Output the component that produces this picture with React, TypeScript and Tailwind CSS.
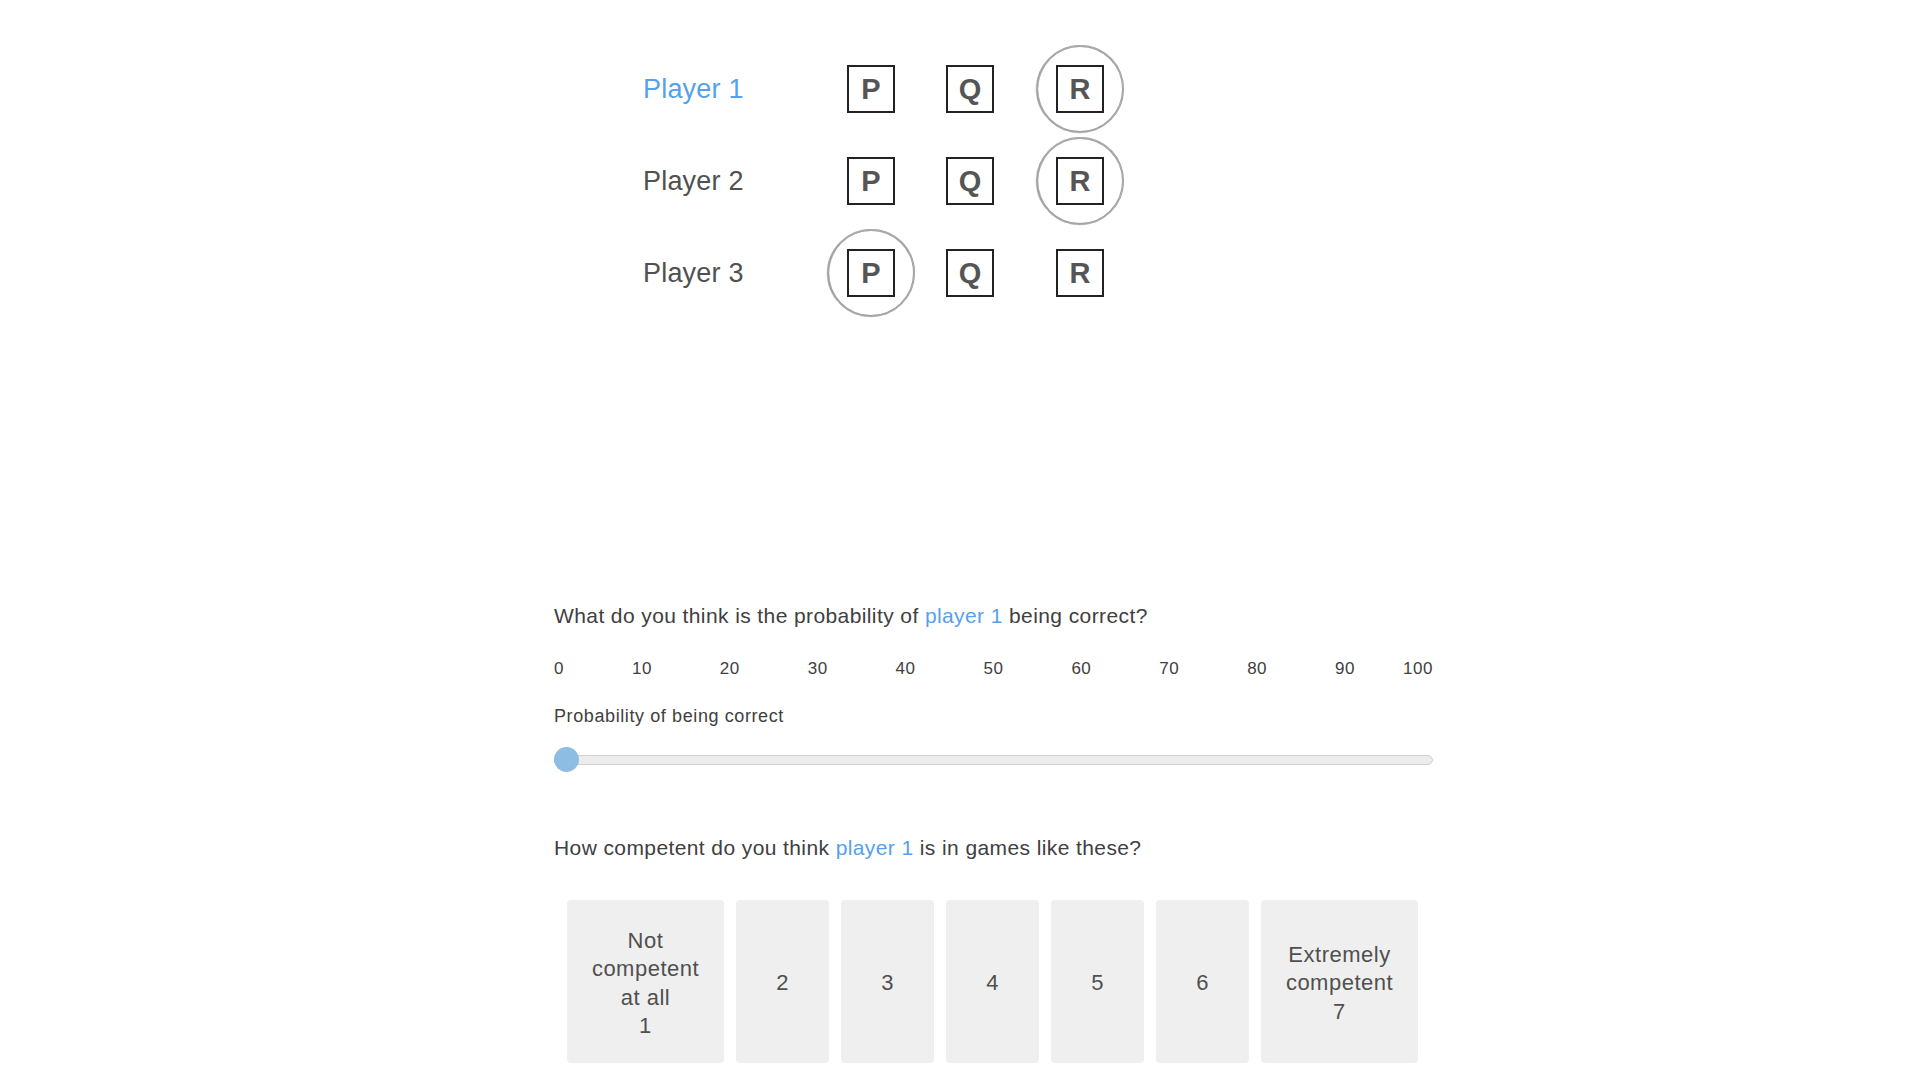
import React from "react";

const BLUE = "#55a1ee";

function SketchCircle() {
  return (
    <svg
      className="absolute inset-0 pointer-events-none"
      width="90"
      height="90"
      viewBox="0 0 90 90"
      fill="none"
    >
      <circle cx="45" cy="45" r="43" stroke="#8c8c8c" strokeWidth="2" opacity="0.85" />
      <ellipse
        cx="45.4"
        cy="44.7"
        rx="42.6"
        ry="43.3"
        stroke="#a8a8a8"
        strokeWidth="1.3"
        opacity="0.7"
        transform="rotate(25 45 45)"
      />
      <circle
        cx="44.6"
        cy="45.4"
        r="43.4"
        stroke="#b5b5b5"
        strokeWidth="1"
        strokeDasharray="7 3 12 2"
        opacity="0.7"
      />
    </svg>
  );
}

function Card({ letter, circled }: { letter: string; circled?: boolean }) {
  return (
    <div className="relative w-[90px] h-[90px] flex items-center justify-center">
      {circled && <SketchCircle />}
      <div className="w-[48px] h-[48px] border-2 border-[#222] flex items-center justify-center bg-white">
        <span className="text-[29px] leading-none font-bold text-[#555]">{letter}</span>
      </div>
    </div>
  );
}

const players = [
  { name: "Player 1", active: true, circled: "R" },
  { name: "Player 2", active: false, circled: "R" },
  { name: "Player 3", active: false, circled: "P" },
];

const ticks = [10, 20, 30, 40, 50, 60, 70, 80, 90];

export default function App() {
  return (
    <div className="min-h-screen w-full bg-white font-['Liberation_Sans',Arial,sans-serif] text-[#444]">
      <div className="pl-[554px] pt-[43px]">
        {/* Players */}
        <div className="ml-[89px] flex flex-col">
          {players.map((p) => (
            <div key={p.name} className="flex items-center h-[92px]">
              <div
                className={
                  "w-[183px] text-[27px] tracking-[0.2px] " +
                  (p.active ? "text-[#55a1ee]" : "text-[#505050]")
                }
              >
                {p.name}
              </div>
              <Card letter="P" circled={p.circled === "P"} />
              <div className="ml-[9px]">
                <Card letter="Q" circled={p.circled === "Q"} />
              </div>
              <div className="ml-[20px]">
                <Card letter="R" circled={p.circled === "R"} />
              </div>
            </div>
          ))}
        </div>

        {/* Question 1 */}
        <div className="w-[879px] mt-[283px]">
          <div className="text-[21px] leading-[28px] tracking-[0.4px] text-[#404040]">
            What do you think is the probability of{" "}
            <span style={{ color: BLUE }}>player 1</span> being correct?
          </div>

          <div className="mt-[27px] flex text-[17px] leading-[24px] tracking-[0.5px] text-[#404040]">
            <div className="w-[43.95px] text-left">0</div>
            {ticks.map((t) => (
              <div key={t} className="w-[87.9px] text-center">
                {t}
              </div>
            ))}
            <div className="w-[43.95px] text-right">100</div>
          </div>

          <div className="mt-[23px] text-[18px] leading-[24px] tracking-[0.6px] text-[#404040]">
            Probability of being correct
          </div>

          <div className="mt-[19px] relative h-[25px] flex items-center">
            <div className="w-full h-[10px] rounded-full bg-[#ececec] border border-[#d2d2d2]" />
            <div className="absolute left-0 top-0 w-[25px] h-[25px] rounded-full bg-[#8dbde2]" />
          </div>

          {/* Question 2 */}
          <div className="mt-[62px] text-[21px] leading-[28px] tracking-[0.4px] text-[#404040]">
            How competent do you think{" "}
            <span style={{ color: BLUE }}>player 1</span> is in games like these?
          </div>

          <div className="mt-[38px] pl-[13px] flex gap-[12px] text-[22px] leading-[28.5px] tracking-[0.5px] text-[#505050]">
            <div className="w-[157px] h-[163px] pt-[4px] rounded-[4px] bg-[#efefef] flex items-center justify-center text-center">
              <span>
                Not
                <br />
                competent
                <br />
                at all
                <br />1
              </span>
            </div>
            {[2, 3, 4, 5, 6].map((n) => (
              <div
                key={n}
                className="w-[93px] h-[163px] pt-[4px] rounded-[4px] bg-[#efefef] flex items-center justify-center text-center"
              >
                {n}
              </div>
            ))}
            <div className="w-[157px] h-[163px] pt-[4px] rounded-[4px] bg-[#efefef] flex items-center justify-center text-center">
              <span>
                Extremely
                <br />
                competent
                <br />7
              </span>
            </div>
          </div>
        </div>
      </div>
    </div>
  );
}
